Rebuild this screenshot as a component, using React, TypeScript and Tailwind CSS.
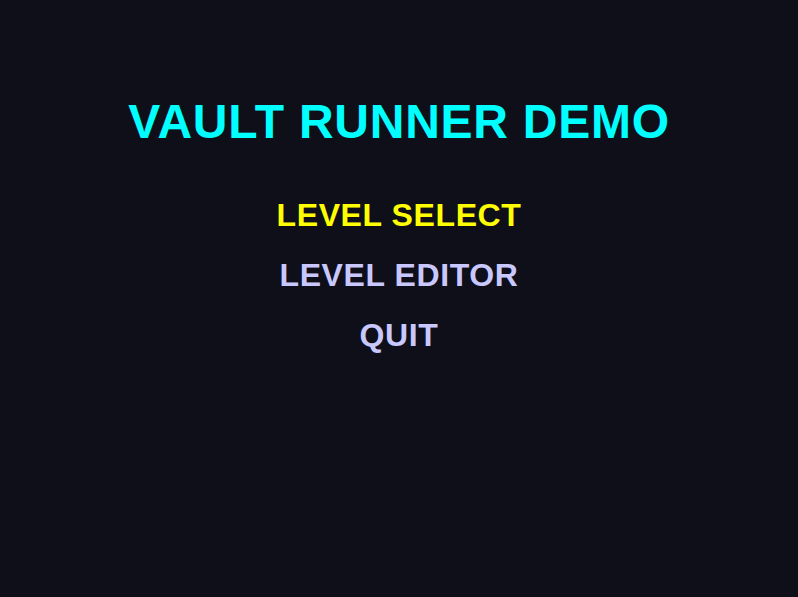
const items = [
  { label: 'LEVEL SELECT', active: true },
  { label: 'LEVEL EDITOR', active: false },
  { label: 'QUIT', active: false },
];

export default function App() {
  return (
    <div className="w-[798px] h-[597px] bg-[#0f0f19] flex flex-col items-center pt-[97px] font-['Liberation_Sans',Arial,sans-serif] font-bold select-none">
      <h1 className="text-[48px] leading-[50px] tracking-[0.75px] text-[#00ffff]">VAULT RUNNER DEMO</h1>
      <ul className="mt-[38px] flex flex-col items-center">
        {items.map((item) => (
          <li
            key={item.label}
            className={
              item.active
                ? 'text-[32px] leading-[60px] tracking-[0.6px] text-[#ffff00]'
                : 'text-[32px] leading-[60px] tracking-[0.6px] text-[#c8c8ff]'
            }
          >
            {item.label}
          </li>
        ))}
      </ul>
    </div>
  );
}
